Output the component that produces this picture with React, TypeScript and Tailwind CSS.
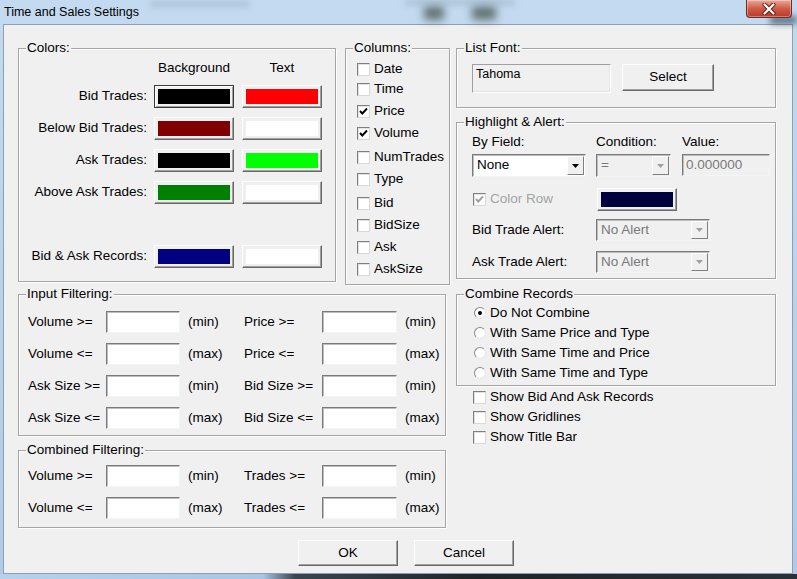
import React from "react";

function Group({ label, className, children }: { label: string; className: string; children?: React.ReactNode }) {
  return (
    <div className={`relative border border-[#a5a5a5] shadow-[inset_1px_1px_0_#ffffff,1px_1px_0_#ffffff] ${className}`}>
      <span className="absolute left-[7px] top-[-9px] bg-[#f0f0f0] px-[1px] leading-[16px] whitespace-nowrap">{label}</span>
      {children}
    </div>
  );
}

function ColorBtn({ swatch, focused }: { swatch: string; focused?: boolean }) {
  return (
    <div
      className={`w-[80px] h-[23px] bg-[#f0f0f0] border ${
        focused
          ? "border-[#3a3a3a] shadow-[inset_1px_1px_0_#ffffff,inset_-1px_-1px_0_#a0a0a0]"
          : "border-t-white border-l-white border-r-[#696969] border-b-[#696969] shadow-[inset_-1px_-1px_0_#a0a0a0]"
      } p-[3px]`}
    >
      <div className={`w-full h-full ${swatch}`} />
    </div>
  );
}

function Check({ checked, disabled }: { checked?: boolean; disabled?: boolean }) {
  return (
    <span className="w-[13px] h-[13px] shrink-0 border border-t-[#7f7f7f] border-l-[#7f7f7f] border-r-[#d9d9d9] border-b-[#d9d9d9] bg-white shadow-[inset_1px_1px_0_#e3e3e3] flex items-center justify-center">
      {checked && (
        <svg width="11" height="11" viewBox="0 0 11 11">
          <path d="M2 5 L4.3 7.5 L9 2.5" fill="none" stroke={disabled ? "#a0a0a0" : "#000"} strokeWidth="1.9" />
        </svg>
      )}
    </span>
  );
}

function Radio({ checked }: { checked?: boolean }) {
  return (
    <span className="w-[12px] h-[12px] shrink-0 rounded-full border border-t-[#8a8a8a] border-l-[#8a8a8a] border-r-[#e6e6e6] border-b-[#e6e6e6] bg-white flex items-center justify-center">
      {checked && <span className="w-[4px] h-[4px] rounded-full bg-black" />}
    </span>
  );
}

function Field({ w, disabled, text }: { w: string; disabled?: boolean; text?: string }) {
  return (
    <div
      className={`${w} h-[22px] border border-t-[#7a7a7a] border-l-[#7a7a7a] border-r-[#f4f4f4] border-b-[#f4f4f4] shadow-[inset_1px_1px_0_#bdbdbd] ${
        disabled ? "bg-[#f0f0f0] text-[#7a7a7a]" : "bg-white"
      } flex items-center pl-[3px]`}
    >
      {text}
    </div>
  );
}

function Combo({ w, text, disabled, h }: { w: string; text: string; disabled?: boolean; h: string }) {
  return (
    <div
      className={`${w} ${h} border border-t-[#7a7a7a] border-l-[#7a7a7a] border-r-[#f4f4f4] border-b-[#f4f4f4] shadow-[inset_1px_1px_0_#bdbdbd] ${
        disabled ? "bg-[#f0f0f0] text-[#7a7a7a]" : "bg-white"
      } flex items-stretch p-[1px]`}
    >
      <span className="flex-1 flex items-center pl-[3px]">{text}</span>
      <span className="w-[17px] bg-[#f0f0f0] border border-t-white border-l-white border-r-[#808080] border-b-[#808080] flex items-center justify-center">
        <svg width="7" height="4" viewBox="0 0 7 4">
          <path d="M0 0 H7 L3.5 4 Z" fill={disabled ? "#a0a0a0" : "#000"} />
        </svg>
      </span>
    </div>
  );
}

function Btn({ w, h, children }: { w: string; h: string; children: React.ReactNode }) {
  return (
    <div
      className={`${w} ${h} bg-[#f0f0f0] border border-t-white border-l-white border-r-[#696969] border-b-[#696969] shadow-[inset_-1px_-1px_0_#a0a0a0] flex items-center justify-center`}
    >
      {children}
    </div>
  );
}

function ColorRow({ label, bg, fg, focused, mt }: { label: string; bg: string; fg: string; focused?: boolean; mt: string }) {
  return (
    <div className={`flex items-center h-[23px] ${mt}`}>
      <span className="w-[128px] text-right whitespace-nowrap">{label}</span>
      <span className="ml-[7px]">
        <ColorBtn swatch={bg} focused={focused} />
      </span>
      <span className="ml-[8px]">
        <ColorBtn swatch={fg} />
      </span>
    </div>
  );
}

function FilterRow({ l1, u1, l2, u2 }: { l1: string; u1: string; l2: string; u2: string }) {
  return (
    <div className="flex items-center h-[22px]">
      <span className="w-[87px] pl-[9px] whitespace-nowrap">{l1}</span>
      <Field w="w-[74px]" />
      <span className="w-[56px] ml-[8px]">{u1}</span>
      <span className="w-[78px] whitespace-nowrap">{l2}</span>
      <Field w="w-[75px]" />
      <span className="ml-[8px]">{u2}</span>
    </div>
  );
}

export default function App() {
  const columns: [string, boolean, string][] = [
    ["Date", false, "mt-0"],
    ["Time", false, "mt-0"],
    ["Price", true, "mt-[2px]"],
    ["Volume", true, "mt-[2px]"],
    ["NumTrades", false, "mt-[4px]"],
    ["Type", false, "mt-[2px]"],
    ["Bid", false, "mt-[4px]"],
    ["BidSize", false, "mt-[2px]"],
    ["Ask", false, "mt-[2px]"],
    ["AskSize", false, "mt-[2px]"],
  ];
  return (
    <div className="w-[797px] h-[579px] relative overflow-hidden flex flex-col bg-gradient-to-b from-[#c3daf0] to-[#b0cbe7] font-['Liberation_Sans',Arial,sans-serif] text-[13.5px] text-black">
      {/* title bar */}
      <div className="relative h-[24px] shrink-0 flex items-center pl-[4px] text-[12.5px] text-black">
        <span className="absolute left-[150px] top-[1px] w-[100px] h-[6px] bg-[#9fb3c6] blur-[3px] opacity-60" />
        <span className="absolute left-[424px] top-[6px] w-[20px] h-[14px] bg-[#3a4a40] blur-[4px] opacity-70" />
        <span className="absolute left-[472px] top-[6px] w-[24px] h-[14px] bg-[#3a4a40] blur-[4px] opacity-70" />
        <span className="absolute left-[405px] top-[0px] w-[110px] h-[5px] bg-[#94a9bc] blur-[3px] opacity-60" />
        <span className="absolute left-[770px] top-[16px] w-[27px] h-[8px] bg-[#334455] blur-[3px] opacity-70" />
        <span className="relative">Time and Sales Settings</span>
        <div className="absolute left-[746px] top-0 w-[46px] h-[18px] rounded-b-[4px] border border-t-0 border-[#6e2b22] bg-gradient-to-b from-[#e9a99b] via-[#cf5b47] to-[#b8382a] shadow-[inset_0_0_0_1px_rgba(255,255,255,0.35)] flex items-center justify-center">
          <svg width="14" height="12" viewBox="0 0 14 12">
            <path d="M2.5 1.5 L11.5 10.5 M11.5 1.5 L2.5 10.5" stroke="#5a2018" strokeWidth="4" strokeLinecap="round" />
            <path d="M2.5 1.5 L11.5 10.5 M11.5 1.5 L2.5 10.5" stroke="#ffffff" strokeWidth="2.2" strokeLinecap="round" />
          </svg>
        </div>
      </div>

      {/* client */}
      <div className="ml-[3px] mr-[4px] h-[550px] shrink-0 border border-[#8d9fb3] bg-[#f0f0f0] flex flex-col pl-[14px] pt-[23px]">
        <div className="flex">
          {/* left column */}
          <div className="w-[432px] flex flex-col">
            <div className="flex h-[234px] items-start">
              <Group label="Colors:" className="w-[318px] h-[234px]">
                <div className="flex flex-col pt-[11px]">
                  <div className="flex h-[16px] items-center">
                    <span className="ml-[135px] w-[80px] text-center">Background</span>
                    <span className="ml-[8px] w-[80px] text-center">Text</span>
                  </div>
                  <ColorRow label="Bid Trades:" bg="bg-black" fg="bg-[#ff0000]" focused mt="mt-[9px]" />
                  <ColorRow label="Below Bid Trades:" bg="bg-[#800000]" fg="bg-white" mt="mt-[9px]" />
                  <ColorRow label="Ask Trades:" bg="bg-black" fg="bg-[#00ff00]" mt="mt-[9px]" />
                  <ColorRow label="Above Ask Trades:" bg="bg-[#008000]" fg="bg-white" mt="mt-[9px]" />
                  <ColorRow label="Bid & Ask Records:" bg="bg-[#000080]" fg="bg-white" mt="mt-[41px]" />
                </div>
              </Group>
              <Group label="Columns:" className="ml-[9px] w-[105px] h-[237px]">
                <div className="flex flex-col pt-[10px]">
                  {columns.map(([c, on, mt]) => (
                    <div key={c} className={`flex items-center h-[20px] pl-[11px] ${mt}`}>
                      <Check checked={on} />
                      <span className="ml-[4px] whitespace-nowrap">{c}</span>
                    </div>
                  ))}
                </div>
              </Group>
            </div>

            <Group label="Input Filtering:" className="mt-[12px] w-[428px] h-[142px]">
              <div className="flex flex-col pt-[16px] gap-[10px]">
                <FilterRow l1="Volume >=" u1="(min)" l2="Price >=" u2="(min)" />
                <FilterRow l1="Volume <=" u1="(max)" l2="Price <=" u2="(max)" />
                <FilterRow l1="Ask Size >=" u1="(min)" l2="Bid Size >=" u2="(min)" />
                <FilterRow l1="Ask Size <=" u1="(max)" l2="Bid Size <=" u2="(max)" />
              </div>
            </Group>

            <Group label="Combined Filtering:" className="mt-[14px] w-[428px] h-[78px]">
              <div className="flex flex-col pt-[14px] gap-[10px]">
                <FilterRow l1="Volume >=" u1="(min)" l2="Trades >=" u2="(min)" />
                <FilterRow l1="Volume <=" u1="(max)" l2="Trades <=" u2="(max)" />
              </div>
            </Group>
          </div>

          {/* right column */}
          <div className="ml-[6px] w-[320px] flex flex-col">
            <Group label="List Font:" className="h-[60px]">
              <div className="flex items-start pt-[15px] pl-[15px]">
                <div className="w-[139px] h-[29px] border border-t-[#a0a0a0] border-l-[#a0a0a0] border-r-white border-b-white shadow-[inset_-1px_-1px_0_#e3e3e3] text-[12.5px] pl-[3px] pt-[1px] leading-[16px]">
                  Tahoma
                </div>
                <span className="ml-[11px]">
                  <Btn w="w-[92px]" h="h-[27px]">Select</Btn>
                </span>
              </div>
            </Group>

            <Group label="Highlight & Alert:" className="mt-[14px] h-[157px]">
              <div className="flex flex-col pt-[11px]">
                <div className="flex h-[16px] items-center">
                  <span className="pl-[15px] w-[139px]">By Field:</span>
                  <span className="w-[86px]">Condition:</span>
                  <span>Value:</span>
                </div>
                <div className="flex mt-[4px] pl-[15px]">
                  <Combo w="w-[114px]" h="h-[23px]" text="None" />
                  <span className="ml-[10px]">
                    <Combo w="w-[75px]" h="h-[23px]" text="=" disabled />
                  </span>
                  <span className="ml-[11px]">
                    <Field w="w-[88px]" disabled text="0.000000" />
                  </span>
                </div>
                <div className="flex items-center h-[23px] mt-[11px] pl-[16px]">
                  <span className="w-[124px] flex items-center">
                    <Check checked disabled />
                    <span className="ml-[4px] text-[#a3a3a3]">Color Row</span>
                  </span>
                  <ColorBtn swatch="bg-[#00003c]" />
                </div>
                <div className="flex items-center h-[22px] mt-[8px] pl-[15px]">
                  <span className="w-[124px]">Bid Trade Alert:</span>
                  <Combo w="w-[114px]" h="h-[22px]" text="No Alert" disabled />
                </div>
                <div className="flex items-center h-[22px] mt-[10px] pl-[15px]">
                  <span className="w-[124px]">Ask Trade Alert:</span>
                  <Combo w="w-[114px]" h="h-[22px]" text="No Alert" disabled />
                </div>
              </div>
            </Group>

            <Group label="Combine Records" className="mt-[15px] h-[92px]">
              <div className="flex flex-col pt-[8px]">
                {[
                  ["Do Not Combine", true],
                  ["With Same Price and Type", false],
                  ["With Same Time and Price", false],
                  ["With Same Time and Type", false],
                ].map(([t, on]) => (
                  <div key={t as string} className="flex items-center h-[20px] pl-[17px]">
                    <Radio checked={on as boolean} />
                    <span className="ml-[4px]">{t as string}</span>
                  </div>
                ))}
              </div>
            </Group>
            <div className="flex flex-col pt-[1px]">
              {["Show Bid And Ask Records", "Show Gridlines", "Show Title Bar"].map((t) => (
                <div key={t} className="flex items-center h-[20px] pl-[17px]">
                  <Check />
                  <span className="ml-[4px]">{t}</span>
                </div>
              ))}
            </div>
          </div>
        </div>

        <div className="flex mt-[12px] pl-[280px] gap-[16px]">
          <Btn w="w-[100px]" h="h-[26px]">OK</Btn>
          <Btn w="w-[100px]" h="h-[26px]">Cancel</Btn>
        </div>
      </div>

      {/* bottom frame */}
      <div className="flex-1 bg-[linear-gradient(to_right,#b7d1ec_0%,#a9c5e3_33%,#3b4550_37%,#1f2428_60%,#2a3038_100%)]" />
    </div>
  );
}
